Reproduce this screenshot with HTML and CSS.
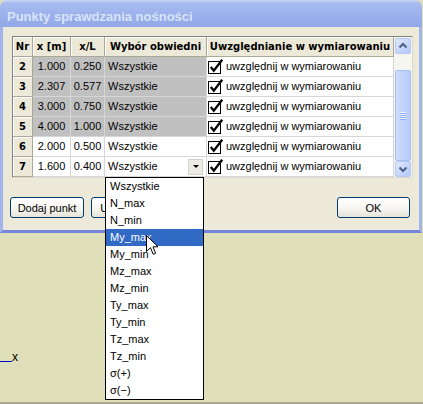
FILE: index.html
```html
<!DOCTYPE html>
<html lang="pl">
<head>
<meta charset="utf-8">
<title>Punkty sprawdzania nośności</title>
<link rel="stylesheet" href="styles.css">
</head>
<body>
<div class="stage">
  <div class="window">
    <div class="titlebar">Punkty sprawdzania nośności</div>
    <div class="client">
      <div class="grid">
        <div class="table">
          <div class="row">
            <div class="c h w-nr">Nr</div>
            <div class="c h w-x">x [m]</div>
            <div class="c h w-l">x/L</div>
            <div class="c h w-wy">Wybór obwiedni</div>
            <div class="c h w-uw">Uwzględnianie w wymiarowaniu</div>
          </div>
          <div class="row">
            <div class="c h w-nr">2</div>
            <div class="c num g w-x">1.000</div>
            <div class="c num g w-l">0.250</div>
            <div class="c wy g w-wy">Wszystkie</div>
            <div class="c uw w-uw"><svg class="cb" width="16" height="16" viewBox="0 0 16 16"><rect x="0.5" y="3.5" width="12" height="12" fill="#fff" stroke="#000"/><path d="M2.8 9 L5.8 12.6 L14.2 1.8" fill="none" stroke="#000" stroke-width="2.3"/></svg><span>uwzględnij w wymiarowaniu</span></div>
          </div>
          <div class="row">
            <div class="c h w-nr">3</div>
            <div class="c num g w-x">2.307</div>
            <div class="c num g w-l">0.577</div>
            <div class="c wy g w-wy">Wszystkie</div>
            <div class="c uw w-uw"><svg class="cb" width="16" height="16" viewBox="0 0 16 16"><rect x="0.5" y="3.5" width="12" height="12" fill="#fff" stroke="#000"/><path d="M2.8 9 L5.8 12.6 L14.2 1.8" fill="none" stroke="#000" stroke-width="2.3"/></svg><span>uwzględnij w wymiarowaniu</span></div>
          </div>
          <div class="row">
            <div class="c h w-nr">4</div>
            <div class="c num g w-x">3.000</div>
            <div class="c num g w-l">0.750</div>
            <div class="c wy g w-wy">Wszystkie</div>
            <div class="c uw w-uw"><svg class="cb" width="16" height="16" viewBox="0 0 16 16"><rect x="0.5" y="3.5" width="12" height="12" fill="#fff" stroke="#000"/><path d="M2.8 9 L5.8 12.6 L14.2 1.8" fill="none" stroke="#000" stroke-width="2.3"/></svg><span>uwzględnij w wymiarowaniu</span></div>
          </div>
          <div class="row">
            <div class="c h w-nr">5</div>
            <div class="c num g w-x">4.000</div>
            <div class="c num g w-l">1.000</div>
            <div class="c wy g w-wy">Wszystkie</div>
            <div class="c uw w-uw"><svg class="cb" width="16" height="16" viewBox="0 0 16 16"><rect x="0.5" y="3.5" width="12" height="12" fill="#fff" stroke="#000"/><path d="M2.8 9 L5.8 12.6 L14.2 1.8" fill="none" stroke="#000" stroke-width="2.3"/></svg><span>uwzględnij w wymiarowaniu</span></div>
          </div>
          <div class="row">
            <div class="c h w-nr">6</div>
            <div class="c num w-x">2.000</div>
            <div class="c num w-l">0.500</div>
            <div class="c wy w-wy">Wszystkie</div>
            <div class="c uw w-uw"><svg class="cb" width="16" height="16" viewBox="0 0 16 16"><rect x="0.5" y="3.5" width="12" height="12" fill="#fff" stroke="#000"/><path d="M2.8 9 L5.8 12.6 L14.2 1.8" fill="none" stroke="#000" stroke-width="2.3"/></svg><span>uwzględnij w wymiarowaniu</span></div>
          </div>
          <div class="row">
            <div class="c h w-nr">7</div>
            <div class="c num w-x">1.600</div>
            <div class="c num w-l">0.400</div>
            <div class="c wy w-wy"><span>Wszystkie</span><span class="ddbtn"><span class="tri"></span></span></div>
            <div class="c uw w-uw"><svg class="cb" width="16" height="16" viewBox="0 0 16 16"><rect x="0.5" y="3.5" width="12" height="12" fill="#fff" stroke="#000"/><path d="M2.8 9 L5.8 12.6 L14.2 1.8" fill="none" stroke="#000" stroke-width="2.3"/></svg><span>uwzględnij w wymiarowaniu</span></div>
          </div>
        </div>
        <div class="sb">
          <div class="sbbtn"><svg width="14" height="14" viewBox="0 0 14 14"><path d="M3.5 8.5 L7 5 L10.5 8.5" fill="none" stroke="#4d6185" stroke-width="2"/></svg></div>
          <div class="track"></div>
          <div class="thumb"><div class="grip"></div></div>
          <div class="sbbtn"><svg width="14" height="14" viewBox="0 0 14 14"><path d="M3.5 5.5 L7 9 L10.5 5.5" fill="none" stroke="#4d6185" stroke-width="2"/></svg></div>
        </div>
      </div>
      <div class="btns">
        <button class="btn b-add">Dodaj punkt</button>
        <button class="btn b-del">Usuń punkt</button>
        <button class="btn b-ok">OK</button>
      </div>
    </div>
  </div>

  <div class="list">
    <div class="item">Wszystkie</div>
    <div class="item">N_max</div>
    <div class="item">N_min</div>
    <div class="item sel">My_max</div>
    <div class="item">My_min</div>
    <div class="item">Mz_max</div>
    <div class="item">Mz_min</div>
    <div class="item">Ty_max</div>
    <div class="item">Ty_min</div>
    <div class="item">Tz_max</div>
    <div class="item">Tz_min</div>
    <div class="item">σ(+)</div>
    <div class="item">σ(−)</div>
  </div>

  <svg class="cursor" width="13" height="21" viewBox="0 0 13 21"><path d="M0.5 0.5 L0.5 16.5 L4.5 12.7 L7.2 19.3 L9.6 18.3 L7 11.8 L12 11.8 Z" fill="#fff" stroke="#000" stroke-linejoin="miter"/></svg>

  <div class="axis-line"></div>
  <div class="axis-label">x</div>
</div>
</body>
</html>
```

FILE: styles.css
```css
body {
  margin: 0;
  background: #dfdfba;
}

.stage {
  position: relative;
  width: 423px;
  height: 404px;
  box-sizing: border-box;
  border-bottom: 2px solid #a6a692;
  overflow: hidden;
  font-family: "Liberation Sans", Arial, sans-serif;
  font-size: 11px;
  color: #000;
}

.window {
  width: 422px;
}

.titlebar {
  height: 27px;
  box-sizing: border-box;
  padding: 9px 0 0 7px;
  border-radius: 7px 7px 0 0;
  background: linear-gradient(#cbd8f7 0, #a9bcf0 3px, #9db2ec 13px, #92a8e8 27px);
  color: #d8e4f8;
  font: bold 13px/15px "Liberation Sans", Arial, sans-serif;
}

.client {
  height: 206px;
  box-sizing: border-box;
  padding: 9px 6px 0 9px;
  background: #ece9d8;
  border: 3px solid #a1b4ec;
  border-top: 0;
  border-bottom-color: #7485dc;
}

.grid {
  display: flex;
  width: 401px;
  height: 142px;
  box-sizing: border-box;
  border: 1px solid;
  border-color: #828282 #dcd9cc #dcd9cc #828282;
  background: #fff;
}

.table {
  width: 381px;
  display: flex;
  flex-direction: column;
}

.row {
  display: flex;
  height: 20px;
}

.c {
  box-sizing: border-box;
  height: 20px;
  border-right: 1px solid #d6d6d6;
  border-bottom: 1px solid #d6d6d6;
  line-height: 19px;
  white-space: nowrap;
  overflow: hidden;
}

.h {
  background: #ece9d8;
  border-color: #aca899;
  box-shadow: inset 1px 1px 0 #fff;
  font: bold 10px/19px "DejaVu Sans", Verdana, sans-serif;
  text-align: center;
}

.w-nr { width: 20px; }
.w-x { width: 38px; }
.w-l { width: 34px; }
.w-wy { width: 102px; }
.w-uw { width: 187px; }

.g {
  background: #c0c0c0;
}

.num {
  text-align: center;
}

.wy {
  display: flex;
  align-items: center;
  padding-left: 3px;
}

.ddbtn {
  margin-left: auto;
  margin-right: 3px;
  width: 15px;
  height: 16px;
  box-sizing: border-box;
  background: #ecebe4;
  border: 1px solid #d4d2c8;
  display: flex;
  align-items: center;
  justify-content: center;
}

.tri {
  width: 0;
  height: 0;
  border-left: 3px solid transparent;
  border-right: 3px solid transparent;
  border-top: 3px solid #000;
}

.uw {
  display: flex;
  align-items: center;
  gap: 2px;
  padding-left: 1px;
}

.cb {
  flex: none;
  margin-top: -1px;
}

.sb {
  width: 18px;
  box-sizing: border-box;
  padding: 1px 1px 0 1px;
  display: flex;
  flex-direction: column;
  background: #f6f5f0;
}

.sbbtn {
  height: 16px;
  box-sizing: border-box;
  border: 1px solid #b6c9f5;
  border-radius: 2px;
  background: linear-gradient(135deg, #e2eafe, #c3d4fb 60%, #b4c9f8);
  display: flex;
  align-items: center;
  justify-content: center;
}

.track {
  height: 16px;
}

.thumb {
  height: 91px;
  box-sizing: border-box;
  border: 1px solid #a8bff3;
  border-radius: 2px;
  background: linear-gradient(to right, #cfdcfd, #c1d3fb 50%, #b6cbf8);
  display: flex;
  align-items: center;
  justify-content: center;
}

.grip {
  width: 6px;
  height: 8px;
  background: repeating-linear-gradient(#eef4fe 0 1px, #8fabef 1px 2px);
}

.btns {
  display: flex;
  margin: 19px 3px 0 -2px;
}

.btn {
  height: 21px;
  box-sizing: border-box;
  padding: 0;
  border: 1px solid #003c74;
  border-radius: 3px;
  background: linear-gradient(#ffffff, #f6f5f0 55%, #e6e4d8);
  font: 11px "Liberation Sans", Arial, sans-serif;
  color: #000;
}

.b-add { width: 74px; }
.b-del { width: 74px; margin-left: 7px; }
.b-ok { width: 73px; margin-left: auto; }

.list {
  position: absolute;
  left: 105px;
  top: 177px;
  width: 99px;
  height: 223px;
  box-sizing: border-box;
  border: 1px solid #000;
  background: #fff;
}

.item {
  height: 17px;
  line-height: 17px;
  padding-left: 4px;
  white-space: nowrap;
}

.item.sel {
  background: #316ac5;
  color: #fff;
}

.cursor {
  position: absolute;
  left: 146px;
  top: 235px;
}

.axis-line {
  position: absolute;
  left: 0;
  top: 361px;
  width: 12px;
  height: 1px;
  background: #0000c8;
}

.axis-label {
  position: absolute;
  left: 12px;
  top: 351px;
  font: 12px/12px "Liberation Sans", Arial, sans-serif;
  color: #000;
}
```
